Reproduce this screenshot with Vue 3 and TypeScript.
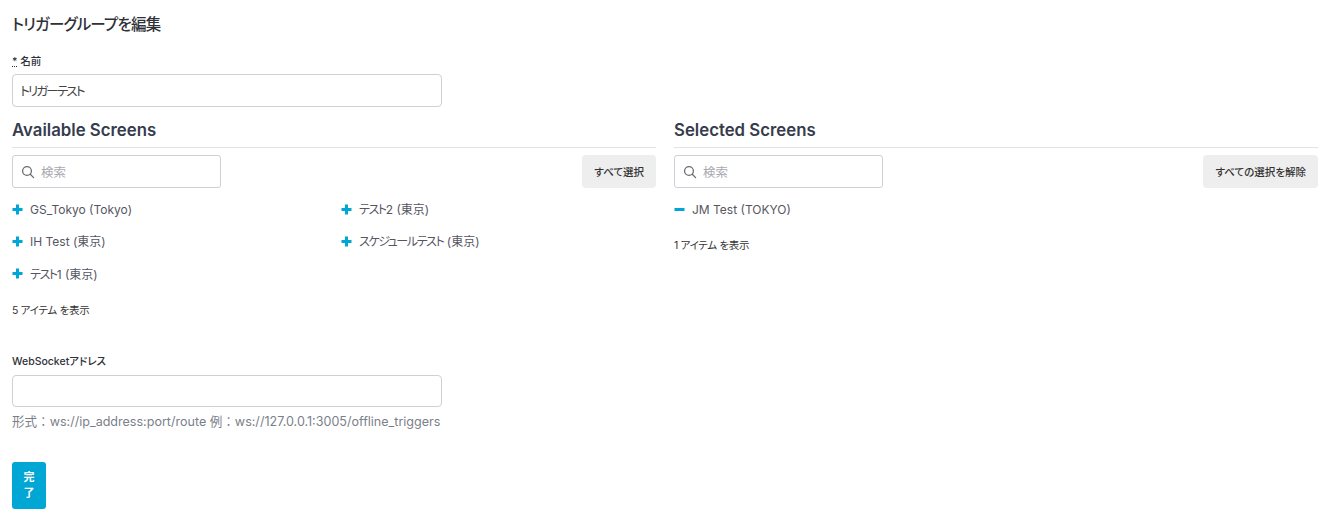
<script setup lang="ts">
interface Item { kana: string; rest: string }
const available: Item[] = [
  { kana: '', rest: 'GS_Tokyo (Tokyo)' },
  { kana: 'テスト', rest: '2 (東京)' },
  { kana: '', rest: 'IH Test (東京)' },
  { kana: 'スケジュールテスト', rest: ' (東京)' },
  { kana: 'テスト', rest: '1 (東京)' },
]
</script>

<template>
  <main class="page">
    <h1 class="title">トリガーグループを編集</h1>
    <div class="name-field">
      <label class="label"><span class="req">*</span> 名前</label>
      <input class="input" value="トリガーテスト" />
    </div>
    <div class="columns">
      <section class="col">
        <h2 class="heading">Available Screens</h2>
        <div class="tools">
          <div class="search">
            <svg class="lens" viewBox="0 0 14 14" width="14" height="14"><circle cx="6" cy="6" r="4.4" fill="none" stroke="#6b6b70" stroke-width="1.3"/><path d="M9.3 9.3 12.6 12.6" stroke="#6b6b70" stroke-width="1.3" stroke-linecap="round"/></svg>
            <span class="ph">検索</span>
          </div>
          <button class="btn">すべて選択</button>
        </div>
        <ul class="items grid">
          <li v-for="a in available" :key="a.kana + a.rest" class="item">
            <svg class="sign" viewBox="0 0 11 11" width="11" height="11"><path d="M5.5 .5v10M.5 5.5h10" stroke="#00a7d4" stroke-width="3"/></svg>
            <span><span class="kana">{{ a.kana }}</span>{{ a.rest }}</span>
          </li>
        </ul>
        <p class="count count-left">5 アイテム を表示</p>
      </section>
      <section class="col">
        <h2 class="heading">Selected Screens</h2>
        <div class="tools">
          <div class="search">
            <svg class="lens" viewBox="0 0 14 14" width="14" height="14"><circle cx="6" cy="6" r="4.4" fill="none" stroke="#6b6b70" stroke-width="1.3"/><path d="M9.3 9.3 12.6 12.6" stroke="#6b6b70" stroke-width="1.3" stroke-linecap="round"/></svg>
            <span class="ph">検索</span>
          </div>
          <button class="btn">すべての選択を解除</button>
        </div>
        <ul class="items">
          <li class="item">
            <svg class="sign" viewBox="0 0 11 11" width="11" height="11"><path d="M.5 5.5h10" stroke="#00a7d4" stroke-width="3"/></svg>
            <span>JM Test (TOKYO)</span>
          </li>
        </ul>
        <p class="count">1 アイテム を表示</p>
      </section>
    </div>
    <div class="ws-field">
      <label class="label ws-label">WebSocketアドレス</label>
      <input class="input ws" />
      <p class="help">形式：ws://ip_address:port/route 例：ws://127.0.0.1:3005/offline_triggers</p>
    </div>
    <button class="done">完了</button>
  </main>
</template>

<style scoped>
.page {
  box-sizing: border-box;
  width: 1335px;
  height: 531px;
  padding: 15px 17px 0 12px;
  overflow: hidden;
  background: #fff;
  font-family: Inter, "Noto Sans CJK JP", sans-serif;
  font-feature-settings: "palt";
  color: #333;
}
.title {
  margin: 0;
  font-size: 15.5px;
  line-height: 20px;
  font-weight: 500;
  letter-spacing: -0.8px;
  color: #2f3138;
}
.name-field {
  margin-top: 19px;
}
.label {
  display: block;
  height: 20px;
  font-size: 10.5px;
  line-height: 16px;
  font-weight: 500;
  color: #30323a;
}
.ws-label {
  height: 21px;
}
.req {
  text-decoration: underline dotted;
}
.input {
  display: block;
  box-sizing: border-box;
  width: 430px;
  height: 33px;
  padding: 0 7px;
  border: 1px solid #cfcfd6;
  border-radius: 4px;
  background: #fff;
  font: inherit;
  font-feature-settings: "palt";
  font-size: 12.5px;
  letter-spacing: -1.8px;
  color: #444;
  outline: none;
}
.ws {
  height: 32px;
}
.columns {
  display: grid;
  grid-template-columns: 644px 644px;
  column-gap: 18px;
  margin-top: 13px;
}
.heading {
  margin: 0;
  height: 27px;
  border-bottom: 1px solid #e2e2e2;
  font-size: 16.8px;
  line-height: 21px;
  font-weight: 600;
  color: #363c4d;
}
.tools {
  display: flex;
  justify-content: space-between;
  margin-top: 7px;
}
.search {
  box-sizing: border-box;
  display: flex;
  align-items: center;
  gap: 6px;
  width: 209px;
  height: 33px;
  padding-left: 8px;
  border: 1px solid #cfcfd6;
  border-radius: 3px;
}
.ph {
  font-size: 12.5px;
  color: #a9a9b0;
}
.btn {
  height: 33px;
  padding: 0 12px;
  border: 0;
  border-radius: 4px;
  background: #eeeeee;
  font: inherit;
  font-feature-settings: "palt";
  font-size: 10.5px;
  font-weight: 500;
  color: #333;
}
.items {
  list-style: none;
  margin: 14px 0 0;
  padding: 0;
}
.grid {
  display: grid;
  grid-template-columns: 329px 1fr;
}
.item {
  display: flex;
  align-items: flex-start;
  gap: 7px;
  height: 32.4px;
  box-sizing: border-box;
  font-size: 12px;
  line-height: 16px;
  color: #55565f;
}
.kana {
  letter-spacing: -1.4px;
}
.sign {
  margin-top: 1.5px;
}
.count {
  margin: 0;
  padding-top: 3.6px;
  font-size: 10.5px;
  line-height: 16px;
  letter-spacing: -0.3px;
  color: #333;
}
.count-left {
  padding-top: 3.8px;
}
.ws-field {
  margin-top: 35px;
}
.help {
  margin: 7px 0 0;
  font-size: 12.56px;
  line-height: 16px;
  font-feature-settings: normal;
  color: #7b7f8a;
  white-space: nowrap;
}
.done {
  display: block;
  box-sizing: border-box;
  width: 34px;
  height: 47px;
  margin-top: 32px;
  padding: 0 8px;
  border: 0;
  border-radius: 3px;
  background: #00a7d4;
  color: #fff;
  font: inherit;
  font-size: 11px;
  line-height: 16px;
  font-weight: 600;
}
</style>
